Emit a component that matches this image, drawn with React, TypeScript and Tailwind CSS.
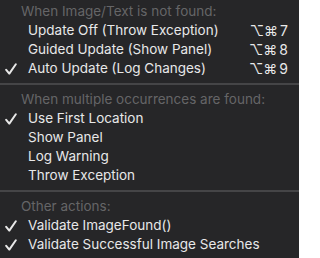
type Item = { label: string; checked?: boolean; shortcut?: string };
type Section = { title: string; items: Item[] };

const sections: Section[] = [
  {
    title: 'When Image/Text is not found:',
    items: [
      { label: 'Update Off (Throw Exception)', shortcut: '7' },
      { label: 'Guided Update (Show Panel)', shortcut: '8' },
      { label: 'Auto Update (Log Changes)', shortcut: '9', checked: true },
    ],
  },
  {
    title: 'When multiple occurrences are found:',
    items: [
      { label: 'Use First Location', checked: true },
      { label: 'Show Panel' },
      { label: 'Log Warning' },
      { label: 'Throw Exception' },
    ],
  },
  {
    title: 'Other actions:',
    items: [
      { label: 'Validate ImageFound()', checked: true },
      { label: 'Validate Successful Image Searches', checked: true },
    ],
  },
];

const CheckMark = () => (
  <svg viewBox="0 0 12 12" className="w-[12px] h-[12px]" fill="none" stroke="currentColor" strokeWidth={2} strokeLinecap="round" strokeLinejoin="round">
    <path d="M1.2 6.8 L4.3 10.6 L10.8 1.2" />
  </svg>
);

const App = () => {
  return (
    <div className="w-[299px] h-[258px] pt-[2px] bg-[#262628] overflow-hidden text-[13.5px] text-[#e8e8e8] font-['Inter','DejaVu_Sans',sans-serif]">
      {sections.map((section, si) => (
        <div key={section.title}>
          {si > 0 && <div className="h-[12px] flex items-center"><div className="w-full h-[2px] bg-[#454547]" /></div>}
          <div className="h-[19px] flex items-center pl-[21px] text-[#656567]">{section.title}</div>
          {section.items.map(item => (
            <div key={item.label} className="h-[19px] flex items-center">
              <div className="w-[28px] pl-[5px] flex items-center">{item.checked && <CheckMark />}</div>
              <span className="flex-1">{item.label}</span>
              {item.shortcut && (
                <span className="pr-[11px] flex items-center gap-[2px] text-[14px]">
                  <span>⌥⌘</span>{item.shortcut}
                </span>
              )}
            </div>
          ))}
        </div>
      ))}
    </div>
  );
};

export default App;
